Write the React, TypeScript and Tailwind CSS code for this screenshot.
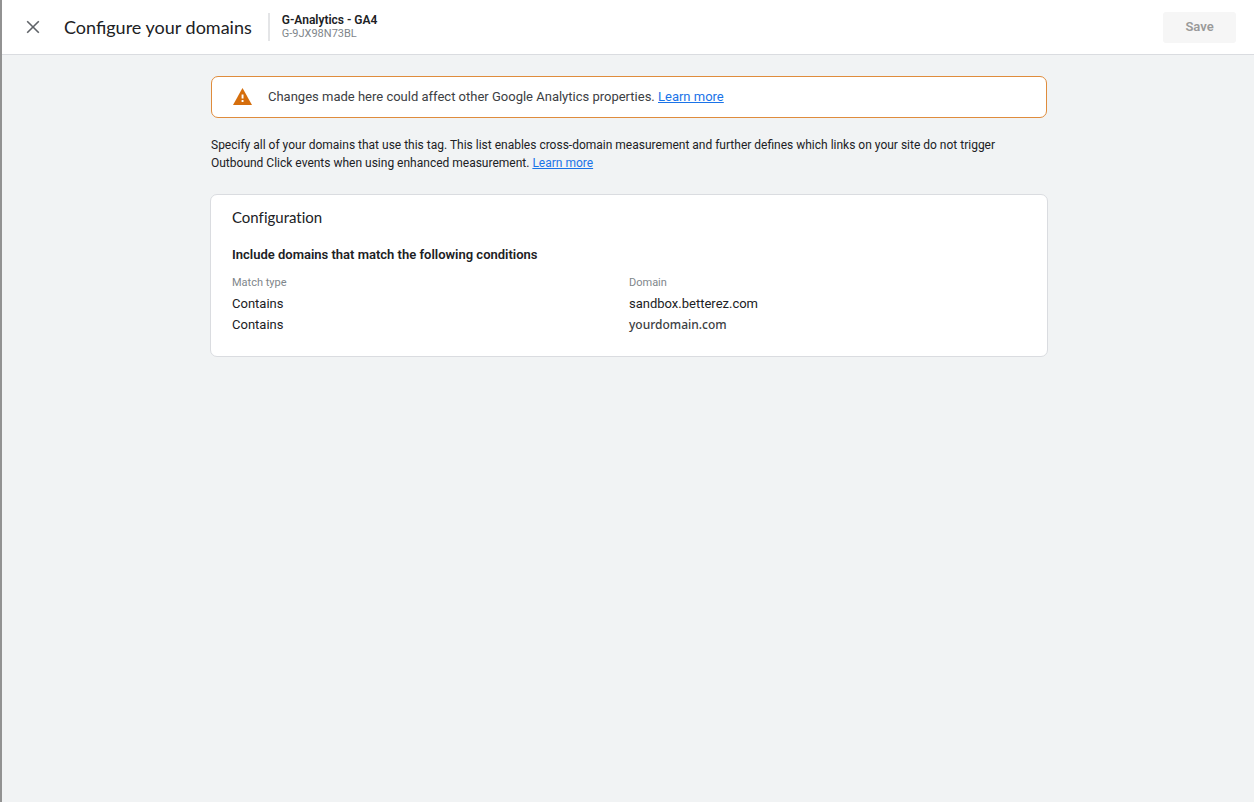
type DomainRule = {
  matchType: string;
  domain: string;
  muted?: boolean;
};

const rules: DomainRule[] = [
  { matchType: "Contains", domain: "sandbox.betterez.com" },
  { matchType: "Contains", domain: "yourdomain.com", muted: true }
];

function CloseIcon() {
  return (
    <svg viewBox="0 0 14 14" className="size-[14px]" fill="none" stroke="#5f6368" strokeWidth="1.6" aria-hidden="true">
      <path d="M1.2 1.2l11.6 11.6M12.8 1.2L1.2 12.8" />
    </svg>
  );
}

function WarningIcon() {
  return (
    <svg viewBox="0 0 19 17" className="h-[17px] w-[19px] shrink-0" aria-hidden="true">
      <path d="M9.5 0L19 17H0z" fill="#d56e0c" />
      <path d="M8.6 6.5h1.9v4H8.6zM8.6 12h1.9v2H8.6z" fill="#fff" />
    </svg>
  );
}

function LearnMore() {
  return (
    <a href="#learn-more" className="text-[#1a73e8] underline">
      Learn more
    </a>
  );
}

function Header() {
  return (
    <header className="flex h-[55px] items-center border-b border-[#dadce0] bg-white pr-[18px] pl-6">
      <button type="button" aria-label="Close" className="flex size-[14px] items-center justify-center">
        <CloseIcon />
      </button>
      <h1 className="ml-6 font-['Lato','Roboto',sans-serif] text-[18px] leading-6 whitespace-nowrap">
        Configure your domains
      </h1>
      <div className="ml-4 border-l-2 border-[#e4e5e7] pl-3">
        <p className="text-xs leading-[14px] font-semibold">G-Analytics - GA4</p>
        <p className="text-[11px] leading-[14px] text-[#80868b]">G-9JX98N73BL</p>
      </div>
      <button
        type="button"
        disabled
        className="ml-auto h-[31px] w-[73px] rounded-[3px] bg-[#f6f6f6] text-[13px] font-semibold text-[#9a9a9a]"
      >
        Save
      </button>
    </header>
  );
}

export default function App() {
  return (
    <div className="min-h-screen border-l-2 border-[#929292] bg-[#f1f3f4] font-['Roboto','Liberation_Sans',sans-serif] text-[#202124]">
      <Header />
      <main className="mx-auto w-full max-w-[840px] pt-[21px] pl-[2px]">
        <div className="mx-px flex h-[42px] items-center gap-4 rounded-[7px] border border-[#df8c3c] bg-white px-[21px] pb-[2px]">
          <WarningIcon />
          <p className="text-[13px] leading-[17px] text-[#3c4043]">
            Changes made here could affect other Google Analytics properties. <LearnMore />
          </p>
        </div>

        <p className="mx-px mt-[18px] text-xs leading-[18px]">
          Specify all of your domains that use this tag. This list enables cross-domain measurement and further defines
          which links on your site do not trigger
          <br />
          Outbound Click events when using enhanced measurement. <LearnMore />
        </p>

        <section className="mt-[22px] rounded-[7px] border border-[#dadce0] bg-white px-[21px] pt-3 pb-[21px]">
          <h2 className="font-['Lato','Roboto',sans-serif] text-[15px] leading-5 [font-variant-ligatures:none]">
            Configuration
          </h2>
          <h3 className="mt-[19px] text-[13px] leading-[18px] font-semibold">
            Include domains that match the following conditions
          </h3>
          <table className="mt-[9px] w-full table-fixed text-left">
            <thead>
              <tr className="h-5 text-[11px] leading-4 text-[#80868b]">
                <th className="p-0 font-normal">Match type</th>
                <th className="p-0 font-normal">Domain</th>
              </tr>
            </thead>
            <tbody>
              {rules.map((rule) => (
                <tr key={rule.domain} className="h-[21px] text-[13px] leading-[18px]">
                  <td className="p-0">{rule.matchType}</td>
                  <td className={rule.muted ? "p-0 font-['Noto_Sans',sans-serif] text-xs font-medium text-[#3c4043]" : "p-0"}>
                    {rule.domain}
                  </td>
                </tr>
              ))}
            </tbody>
          </table>
        </section>
      </main>
    </div>
  );
}
